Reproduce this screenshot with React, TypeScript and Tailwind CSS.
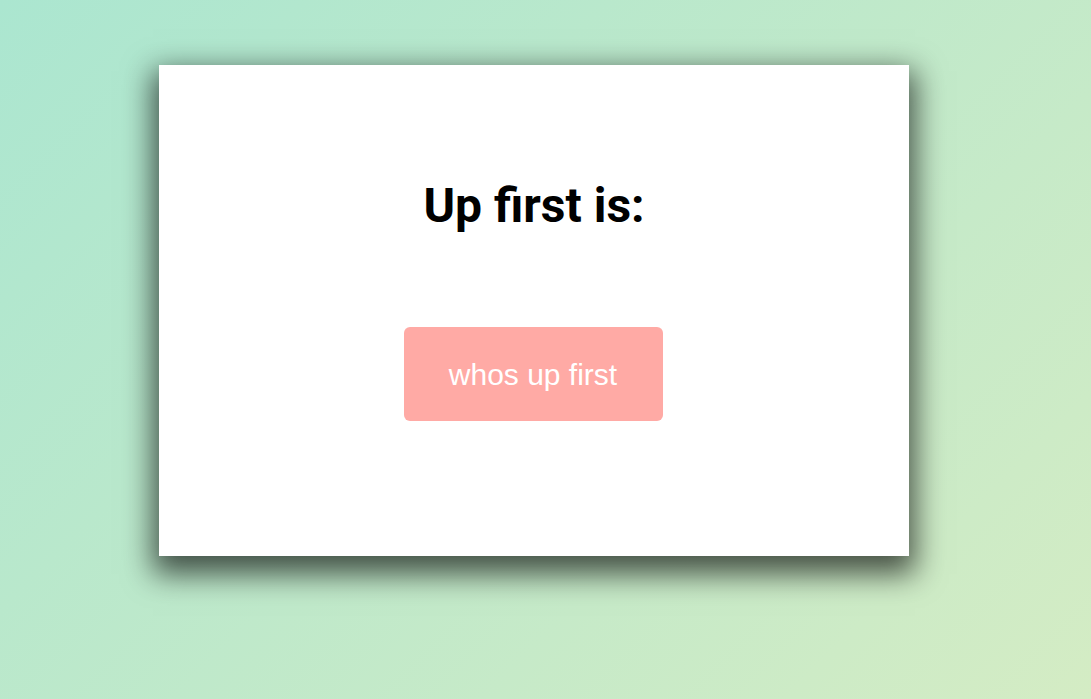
export default function App() {
  return (
    <div className="min-h-screen w-full bg-[linear-gradient(135deg,#abe6d0,#d4ecc4)] pt-[65px] pl-[159px]">
      <div className="flex h-[491px] w-[750px] flex-col items-center bg-white pt-[113px] shadow-[0_12px_28px_6px_rgba(0,0,0,0.65)]">
        <h1 className="text-[48px] font-bold leading-[56px] text-black [font-family:Roboto,sans-serif]">
          Up first is:
        </h1>
        <button className="mt-[93px] mr-[2px] flex h-[94px] w-[259px] items-center justify-center rounded-[6px] bg-[#ffaaa5] text-[30px] text-white [font-family:'Liberation_Sans',Arial,sans-serif]">
          whos up first
        </button>
      </div>
    </div>
  );
}
